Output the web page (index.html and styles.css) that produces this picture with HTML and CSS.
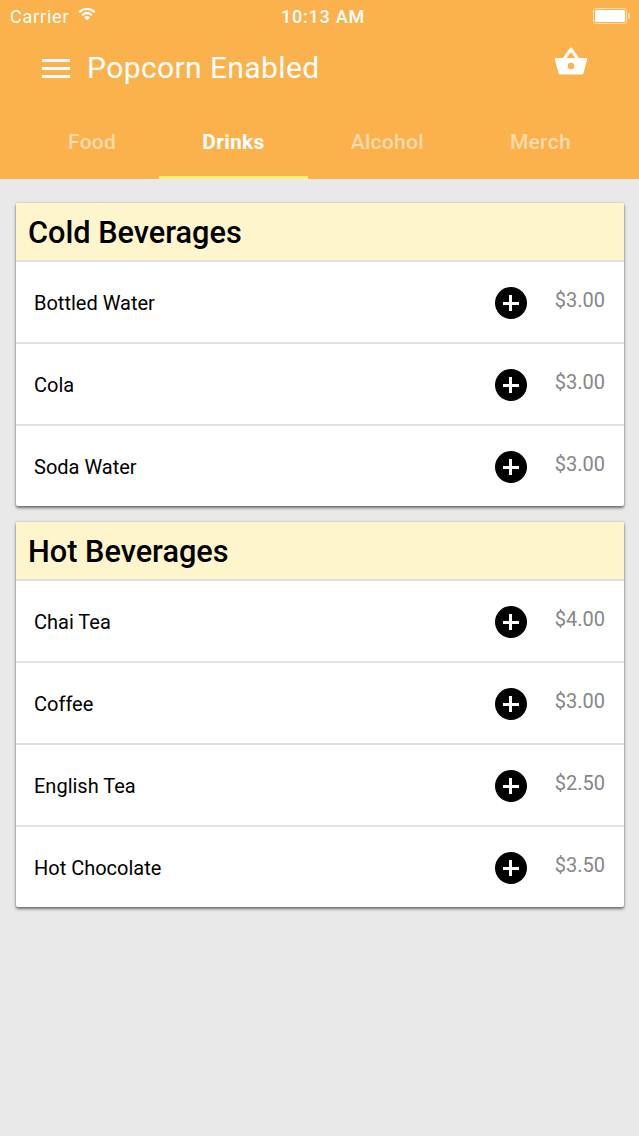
FILE: index.html
```html
<!DOCTYPE html>
<html lang="en">
<head>
<meta charset="utf-8">
<title>Popcorn Enabled</title>
<link rel="stylesheet" href="styles.css">
</head>
<body>
<header class="app-header">
  <div class="status-bar">
    <div class="status-left">
      <span>Carrier</span>
      <svg class="wifi" width="20" height="14" viewBox="0 0 20 14"><path fill="#fff" d="M10 13.5 7.2 10.4a4 4 0 0 1 5.6 0zM5.8 8.9 4.4 7.4a8 8 0 0 1 11.2 0l-1.400 1.500a6 6 0 0 0-8.400 0zM3 5.900 1.600 4.400a12.200 12.200 0 0 1 16.800 0L17 5.900a10.200 10.200 0 0 0-14 0z"/></svg>
    </div>
    <div class="status-time">10:13 AM</div>
    <div class="status-right">
      <span class="battery"><span class="battery-fill"></span></span><span class="battery-cap"></span>
    </div>
  </div>
  <div class="toolbar">
    <div class="toolbar-left">
      <span class="menu-icon"><i></i><i></i><i></i></span>
      <h1 class="title">Popcorn Enabled</h1>
    </div>
    <svg class="basket" width="34" height="30" viewBox="0 0 34 30"><path fill="#fff" fill-rule="evenodd" d="M17 1.500c.5 0 1 .2 1.300.7L25 12h7.200c.7 0 1.100.6 1 1.200l-3.600 13.600A2 2 0 0 1 27.700 28.500H6.300a2 2 0 0 1-1.900-1.700L.8 13.200c-.1-.6.3-1.200 1-1.200H9l6.700-9.800c.3-.5.8-.7 1.300-.7zM17 6l-4.300 6h8.600zM17 16.800a3.200 3.200 0 1 0 0 6.400 3.200 3.200 0 0 0 0-6.400z"/></svg>
  </div>
  <nav class="tabs">
    <span class="tab">Food</span>
    <span class="tab tab-active">Drinks</span>
    <span class="tab">Alcohol</span>
    <span class="tab">Merch</span>
  </nav>
</header>
<main class="content">
  <section class="card">
    <h2 class="card-title">Cold Beverages</h2>
    <div class="row"><span class="name">Bottled Water</span><span class="add"><i class="plus"></i></span><span class="price">$3.00</span></div>
    <div class="row"><span class="name">Cola</span><span class="add"><i class="plus"></i></span><span class="price">$3.00</span></div>
    <div class="row"><span class="name">Soda Water</span><span class="add"><i class="plus"></i></span><span class="price">$3.00</span></div>
  </section>
  <section class="card">
    <h2 class="card-title">Hot Beverages</h2>
    <div class="row"><span class="name">Chai Tea</span><span class="add"><i class="plus"></i></span><span class="price">$4.00</span></div>
    <div class="row"><span class="name">Coffee</span><span class="add"><i class="plus"></i></span><span class="price">$3.00</span></div>
    <div class="row"><span class="name">English Tea</span><span class="add"><i class="plus"></i></span><span class="price">$2.50</span></div>
    <div class="row"><span class="name">Hot Chocolate</span><span class="add"><i class="plus"></i></span><span class="price">$3.50</span></div>
  </section>
</main>
</body>
</html>
```
FILE: styles.css
```css
* { box-sizing: border-box; }
html, body { margin: 0; padding: 0; }
body {
  width: 639px;
  height: 1136px;
  overflow: hidden;
  background: #e9e9e9;
  font-family: Roboto, "Liberation Sans", sans-serif;
}
.app-header {
  height: 179px;
  background: #fbb24c;
  color: #fff;
  display: flex;
  flex-direction: column;
}
.status-bar {
  height: 32px;
  display: grid;
  grid-template-columns: 1fr auto 1fr;
  align-items: center;
  padding: 0 3px 0 10px;
  font-size: 18px;
  letter-spacing: 0.8px;
  color: #fff;
}
.status-left { display: flex; align-items: center; gap: 8px; }
.wifi { margin-top: -4px; }
.status-time { font-weight: 500; }
.status-right { display: flex; justify-content: flex-end; align-items: center; margin-right: 6px; }
.battery {
  width: 34px;
  height: 16px;
  border: 1px solid #fddcab;
  border-radius: 3px;
  padding: 1px;
  display: flex;
}
.battery-fill { flex: 1; background: #fff; border-radius: 1.500px; }
.battery-cap {
  width: 2px;
  height: 6px;
  background: #fddcab;
  border-radius: 0 2px 2px 0;
  margin-left: 1px;
}
.toolbar {
  height: 72px;
  display: flex;
  align-items: center;
  justify-content: space-between;
  padding: 0 51px 0 42px;
}
.toolbar-left { display: flex; align-items: center; gap: 17px; }
.menu-icon { width: 28px; display: flex; flex-direction: column; gap: 5px; }
.menu-icon i { display: block; height: 3px; background: #fff; }
.title { margin: 0; font-size: 30px; font-weight: 400; line-height: 36px; letter-spacing: 0.4px; }
.basket { margin-top: -14px; }
.tabs {
  flex: 1;
  display: flex;
  padding-left: 25px;
}
.tab {
  padding: 4px 43px 0;
  font-size: 21px;
  font-weight: 500;
  line-height: 68px;
  height: 75px;
  letter-spacing: 0.3px;
  color: rgba(255, 255, 255, 0.55);
}
.tab-active {
  color: #fff;
  font-weight: 700;
  border-bottom: 3px solid #fdf06c;
}
.content {
  padding: 24px 15px 0 16px;
  display: flex;
  flex-direction: column;
  gap: 16px;
}
.card {
  background: #fff;
  border-radius: 2px;
  box-shadow: 0 2px 3px rgba(0, 0, 0, 0.5), 0 0 3px rgba(0, 0, 0, 0.18);
}
.card-title {
  margin: 0;
  height: 59px;
  padding-left: 12px;
  background: #fef5cd;
  border-bottom: 2px solid #e0e0e0;
  border-radius: 2px 2px 0 0;
  font-size: 30.700px;
  font-weight: 500;
  line-height: 60px;
  color: #000;
}
.row {
  height: 82px;
  display: flex;
  align-items: center;
  padding: 2px 19px 0 18px;
  border-bottom: 2px solid #e2e2e2;
}
.row:last-child { height: 80px; border-bottom: 0; }
.name { flex: 1; font-size: 20px; color: #000; }
.add {
  width: 32px;
  height: 32px;
  border-radius: 50%;
  background: #000;
  position: relative;
  margin-right: 28px;
}
.plus {
  position: absolute;
  left: 8px;
  top: 14.500px;
  width: 16px;
  height: 3px;
  background: #fff;
}
.plus::after {
  content: "";
  position: absolute;
  left: 6.500px;
  top: -6.500px;
  width: 3px;
  height: 16px;
  background: #fff;
}
.price { font-size: 20px; color: #868686; margin-top: -6px; }
```
